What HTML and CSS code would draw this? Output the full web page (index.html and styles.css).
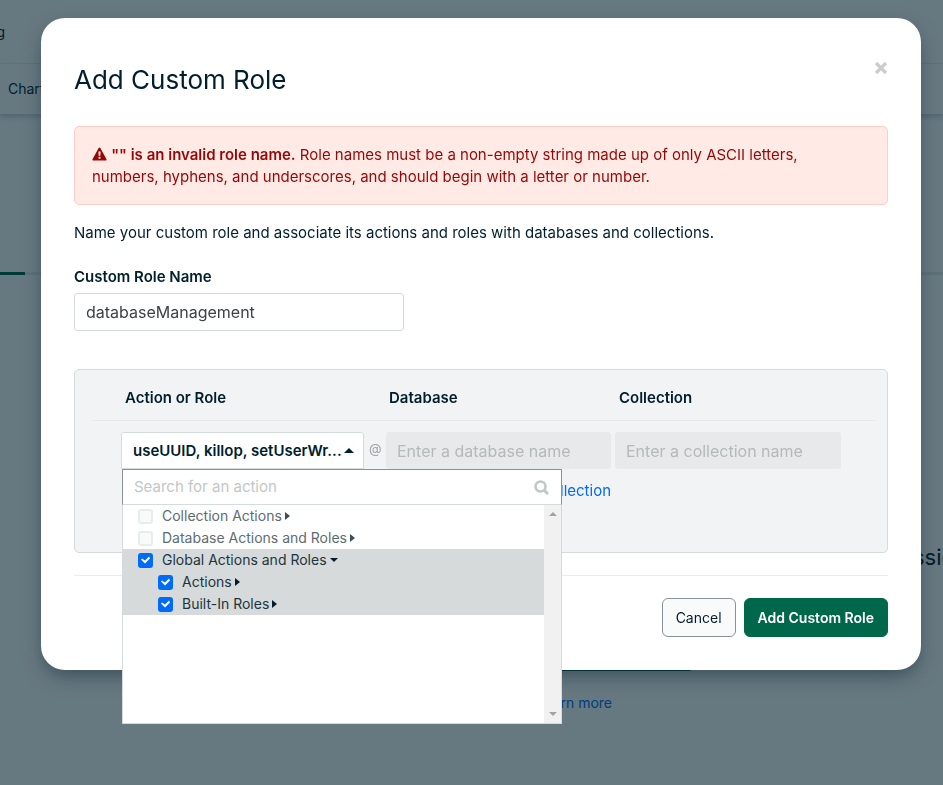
FILE: index.html
```html
<!DOCTYPE html>
<html lang="en">
<head>
<meta charset="utf-8">
<meta name="viewport" content="width=device-width, initial-scale=1">
<title>Add Custom Role</title>
<link rel="stylesheet" href="styles.css">
</head>
<body>
<div class="page">
  <div class="page-top"><a class="page-crumb" href="#">Billing</a></div>
  <nav class="page-nav"><a href="#">Charts</a></nav>
  <div class="page-tabs"><span class="page-tab-active"></span></div>
  <section class="page-empty">
    <h2>ssion</h2>
    <button type="button" class="page-action" aria-label="Create"></button>
    <a class="page-more" href="#">Learn more</a>
  </section>
</div>

<div class="backdrop">
  <form class="modal" role="dialog" aria-labelledby="title">
    <header class="modal-head">
      <h1 id="title">Add Custom Role</h1>
      <button type="button" class="close" aria-label="Close">
        <svg width="14" height="14" viewBox="0 0 14 14"><path d="M2 2 12 12M12 2 2 12" stroke="currentColor" stroke-width="3.200"/></svg>
      </button>
    </header>

    <div class="alert" role="alert">
      <svg class="warn" width="15" height="14" viewBox="0 0 16 14"><path fill="currentColor" fill-rule="evenodd" d="M7.100.5a1 1 0 0 1 1.800 0l6.400 11.800A1 1 0 0 1 14.500 14H1.500a1 1 0 0 1-.8-1.700zM6.800 4.300l.3 4.600h1.800l.3-4.600zM7 10v2h2v-2z"/></svg>
      <strong>"" is an invalid role name.</strong> Role names must be a non-empty string made up of only ASCII letters, numbers, hyphens, and underscores, and should begin with a letter or number.
    </div>

    <p class="intro">Name your custom role and associate its actions and roles with databases and collections.</p>

    <label class="field-label" for="role-name">Custom Role Name</label>
    <input class="text-input role-name" id="role-name" type="text" value="databaseManagement">

    <div class="panel">
      <div class="panel-head">
        <span id="h-action">Action or Role</span>
        <label for="db">Database</label>
        <label for="coll">Collection</label>
      </div>
      <div class="panel-row">
        <div class="picker">
          <button type="button" class="picker-toggle" aria-expanded="true" aria-describedby="h-action">
            <span>useUUID, killop, setUserWr...</span><i class="caret up"></i>
          </button>
          <div class="menu">
            <div class="menu-search">
              <input type="text" placeholder="Search for an action" aria-label="Search for an action">
              <svg width="15" height="15" viewBox="0 0 15 15" fill="none" stroke="currentColor"><circle cx="6.500" cy="6.500" r="5" stroke-width="2.500"/><path d="m10 10 4 4" stroke-width="3"/></svg>
            </div>
            <div class="menu-body">
              <div class="menu-list">
                <label class="item muted"><input type="checkbox"><span>Collection Actions</span><i class="caret right"></i></label>
                <label class="item muted"><input type="checkbox"><span>Database Actions and Roles</span><i class="caret right"></i></label>
                <label class="item on"><input type="checkbox" checked><span>Global Actions and Roles</span><i class="caret down"></i></label>
                <label class="item on sub"><input type="checkbox" checked><span>Actions</span><i class="caret right"></i></label>
                <label class="item on sub"><input type="checkbox" checked><span>Built-In Roles</span><i class="caret right"></i></label>
              </div>
              <div class="scrollbar"><i class="caret up"></i><i class="caret down"></i></div>
            </div>
          </div>
        </div>
        <span class="at">@</span>
        <input class="text-input" id="db" type="text" placeholder="Enter a database name" disabled>
        <input class="text-input" id="coll" type="text" placeholder="Enter a collection name" disabled>
        <a class="add-link" href="#">Add a database or collection</a>
      </div>
    </div>

    <footer class="modal-foot">
      <button type="button" class="btn">Cancel</button>
      <button type="submit" class="btn primary">Add Custom Role</button>
    </footer>
  </form>
</div>
</body>
</html>
```
FILE: styles.css
```css
* { box-sizing: border-box; }

body {
  margin: 0;
  min-height: 100vh;
  overflow: hidden;
  background: #fff;
  color: #001e2b;
  font: 15px/22px Inter, "Liberation Sans", sans-serif;
}

button, input { font: inherit; color: inherit; }
a { text-decoration: none; }

/* Page under the dialog */
.page { overflow: hidden; font-size: 14px; }
.page-top {
  display: flex;
  align-items: center;
  justify-content: flex-end;
  width: 5px;
  height: 63px;
}
.page-crumb { color: #001e2b; }
.page-nav {
  display: flex;
  align-items: center;
  height: 51px;
  padding-left: 8px;
  border-top: 1px solid #e8edeb;
  box-shadow: 0 3px 5px rgba(0, 30, 43, .2);
}
.page-nav a { color: #001e2b; }
.page-tabs {
  height: 161px;
  display: flex;
  align-items: flex-end;
  border-bottom: 3px solid #e8edeb;
}
.page-tab-active {
  width: 25px;
  height: 3px;
  margin-bottom: -3px;
  background: #00684a;
}
.page-empty { display: flex; flex-direction: column; padding-top: 266px; }
.page-empty h2 {
  margin: 0 0 60px;
  align-self: flex-end;
  width: 30px;
  font-size: 22px;
  line-height: 32px;
  font-weight: 400;
}
.page-action {
  width: 280px;
  height: 38px;
  margin-left: 412px;
  border: 0;
  border-radius: 3px;
  background: #00684a;
}
.page-more { width: 612px; margin-top: 21px; text-align: right; color: #016bf8; }

/* Dialog */
.backdrop {
  position: fixed;
  inset: 0;
  padding: 18px 22px 0 41px;
  background: rgba(0, 30, 43, .6);
}
.modal {
  padding: 33px;
  border-radius: 24px;
  background: #fff;
  box-shadow: 0 8px 20px -4px rgba(0, 30, 43, .5);
}
.modal-head {
  display: flex;
  align-items: flex-start;
  justify-content: space-between;
  height: 75px;
  padding-top: 10px;
}
h1 { margin: 0; font-size: 26px; line-height: 38px; font-weight: 400; }
.close { display: flex; padding: 0; border: 0; background: none; color: #ccc; }

.alert {
  padding: 17px 64px 16px 17px;
  border: 1px solid #ffcdc7;
  border-radius: 5px;
  background: #ffeae5;
  color: #970606;
}
.warn { vertical-align: -1px; }
strong { font-weight: 600; }
.intro { margin: 17px 0 22px; }
.field-label { display: block; margin-bottom: 5px; font-weight: 600; }

.text-input {
  min-width: 0;
  height: 38px;
  padding: 0 11px;
  border: 1px solid #d5dadb;
  border-radius: 3px;
  background: #fff;
  color: #3d4247;
  font-size: 16px;
}
.text-input:disabled { height: 37px; padding: 0 10px; border-color: #e8e9eb; background: #e8e9eb; }
.text-input::placeholder { color: #b4b9ba; opacity: 1; }
.role-name { display: block; width: 330px; }

.panel {
  margin-top: 38px;
  height: 184px;
  padding: 17px 11px 0 17px;
  border: 1px solid #d5dbdb;
  border-radius: 5px;
  background: #f2f3f5;
}
.panel-head, .panel-row {
  display: grid;
  grid-template-columns: 243px 22px 225px 230px;
}
.panel-head {
  height: 34px;
  padding-left: 29px;
  border-bottom: 1px solid #e7e9eb;
  font-weight: 600;
}
.panel-head span { grid-column: 1 / 3; padding-left: 4px; }
.panel-head label { padding-left: 3px; }
.panel-head label:last-child { padding-left: 8px; }
.panel-row { padding: 11px 0 0 29px; row-gap: 11px; }
#coll { margin-left: 4px; }
.at { padding: 5px 0 0 5px; color: #a0a5a7; font-size: 13px; }
.add-link { grid-column: 3; text-align: right; color: #016bf8; white-space: nowrap; }

/* Action picker */
.picker { position: relative; }
.picker-toggle {
  display: flex;
  align-items: center;
  gap: 2px;
  width: 100%;
  height: 37px;
  padding: 0 11px;
  border: 1px solid #d5dadb;
  border-radius: 3px 3px 0 0;
  background: #fff;
  font-weight: 600;
  white-space: nowrap;
}
.menu {
  position: absolute;
  z-index: 1;
  top: 37px;
  left: 1px;
  width: 440px;
  background: #fff;
  font-size: 14px;
}
.menu-search {
  display: flex;
  align-items: center;
  height: 36px;
  padding: 0 12px 0 11px;
  border: 1px solid #889397;
  border-bottom-color: #d5dadb;
  color: #c1c7c6;
}
.menu-search input {
  flex: 1;
  min-width: 0;
  padding: 0;
  border: 0;
  outline: 0;
  background: none;
  color: #001e2b;
  font-size: 15px;
}
.menu-search input::placeholder { color: #c1c7c6; }
.menu-body {
  display: flex;
  height: 219px;
  border: 1px solid #d5dadb;
  border-top: 0;
}
.menu-list { flex: 1; }
.item {
  display: flex;
  align-items: center;
  height: 22px;
  padding-left: 15px;
  color: #1c3540;
}
.item.sub { padding-left: 35px; }
.item.muted { color: #5c6c75; }
.item.on { background: #d6dada; }
.item span { margin: 0 3px 0 9px; }
.item input {
  appearance: none;
  width: 15px;
  height: 15px;
  margin: 0;
  border: 2px solid #e8edeb;
  border-radius: 3px;
  background: #f9fbfa;
}
.item input:checked { border-color: #016bf8; background: #016bf8; }
.item input:checked::before {
  content: "";
  display: block;
  width: 11px;
  height: 11px;
  background: #fff;
  clip-path: polygon(1px 5px, 2px 4px, 5px 6px, 9px 2px, 10px 4px, 5px 9px);
}
.scrollbar {
  display: flex;
  flex-direction: column;
  align-items: center;
  justify-content: space-between;
  width: 17px;
  padding: 7px 0;
  background: #f1f1f1;
  color: #a3a3a3;
}

.caret { flex: none; width: 0; height: 0; color: #001e2b; border: 0 solid transparent; }
.scrollbar .caret { color: #a3a3a3; }
.caret.up { border-width: 0 4px 4px; border-bottom-color: currentColor; }
.caret.down { border-width: 4px 4px 0; border-top-color: currentColor; }
.caret.right { border-width: 4px 0 4px 5px; border-left-color: currentColor; }
.muted .caret { color: #3d4f58; }
.picker-toggle .caret { border-width: 0 5px 5px; }

.modal-foot {
  display: flex;
  justify-content: flex-end;
  gap: 8px;
  margin-top: 22px;
  padding-top: 22px;
  border-top: 1px solid #e8edeb;
}
.btn {
  height: 39px;
  padding: 0 13px;
  border: 1px solid #889397;
  border-radius: 6px;
  background: #f9fbfa;
  font-size: 14px;
}
.btn.primary { border-color: #00684a; background: #00684a; color: #fff; font-weight: 600; }
```
